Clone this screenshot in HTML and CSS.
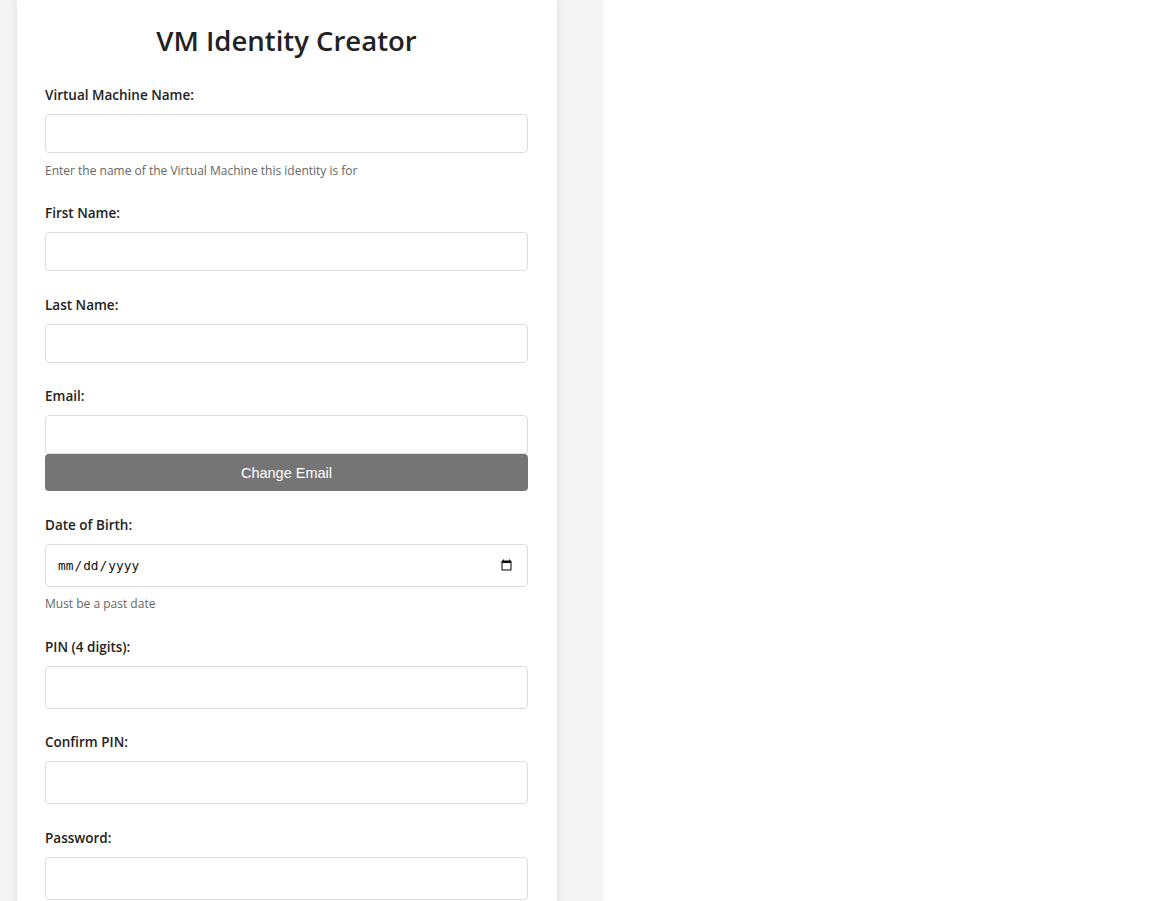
FILE: index.html
```html
<!DOCTYPE html>
<html lang="en">
<head>
<meta charset="utf-8">
<title>VM Identity Creator</title>
<link rel="stylesheet" href="styles.css">
</head>
<body>
<div class="page">
  <main class="card">
    <h1 class="title">VM Identity Creator</h1>
    <form class="form">
      <div class="group">
        <label class="label" for="vm">Virtual Machine Name:</label>
        <input class="field field-text" id="vm" type="text">
        <p class="help">Enter the name of the Virtual Machine this identity is for</p>
      </div>
      <div class="group">
        <label class="label" for="first">First Name:</label>
        <input class="field field-text" id="first" type="text">
      </div>
      <div class="group">
        <label class="label" for="last">Last Name:</label>
        <input class="field field-text" id="last" type="text">
      </div>
      <div class="group">
        <label class="label" for="email">Email:</label>
        <input class="field field-text field-joined" id="email" type="text">
        <button class="btn" type="button">Change Email</button>
      </div>
      <div class="group">
        <label class="label" for="dob">Date of Birth:</label>
        <input class="field field-date" id="dob" type="date">
        <p class="help">Must be a past date</p>
      </div>
      <div class="group">
        <label class="label" for="pin">PIN (4 digits):</label>
        <input class="field field-tall" id="pin" type="password">
      </div>
      <div class="group">
        <label class="label" for="pin2">Confirm PIN:</label>
        <input class="field field-tall" id="pin2" type="password">
      </div>
      <div class="group">
        <label class="label" for="pw">Password:</label>
        <input class="field field-tall" id="pw" type="password">
      </div>
    </form>
  </main>
</div>
</body>
</html>
```

FILE: styles.css
```css
html {
  background: #ffffff;
}

body {
  margin: 0;
  font-family: "Open Sans", "Noto Sans", sans-serif;
  color: #222;
}

.page {
  box-sizing: border-box;
  width: 603px;
  min-height: 100vh;
  background: #f4f4f4;
  padding-left: 17px;
}

.card {
  box-sizing: border-box;
  width: 540px;
  min-height: 100vh;
  background: #fff;
  padding: 24px 29px 40px 28px;
  box-shadow: 0 0 10px rgba(0, 0, 0, 0.1);
}

.title {
  margin: 0 0 28px;
  font-size: 27.5px;
  line-height: 33px;
  font-weight: 600;
  text-align: center;
  color: #222;
}

.form {
  display: flex;
  flex-direction: column;
  gap: 23.5px;
}

.group {
  display: flex;
  flex-direction: column;
}

.label {
  display: block;
  font-size: 13.5px;
  line-height: 21px;
  font-weight: 600;
  color: #222;
  margin-bottom: 8px;
}

.field {
  box-sizing: border-box;
  width: 100%;
  margin: 0;
  border: 1px solid #ddd;
  border-radius: 4px;
  background: #fff;
  padding: 0 12px;
  font-family: "Open Sans", sans-serif;
  font-size: 14px;
  outline: none;
}

.field-text {
  height: 39px;
}

.field-tall {
  height: 43px;
}

.field-date {
  height: 43px;
  padding-left: 11px;
  font-family: "DejaVu Sans Mono", monospace;
  font-size: 12.8px;
  color: #111;
}

.help {
  margin: 8.5px 0 0;
  font-size: 12px;
  line-height: 18px;
  color: #666;
}

.btn {
  height: 37px;
  width: 100%;
  border: none;
  border-radius: 4px;
  background: #757575;
  color: #fff;
  font-family: "Liberation Sans", Arial, sans-serif;
  font-size: 14.5px;
  cursor: pointer;
}
```
